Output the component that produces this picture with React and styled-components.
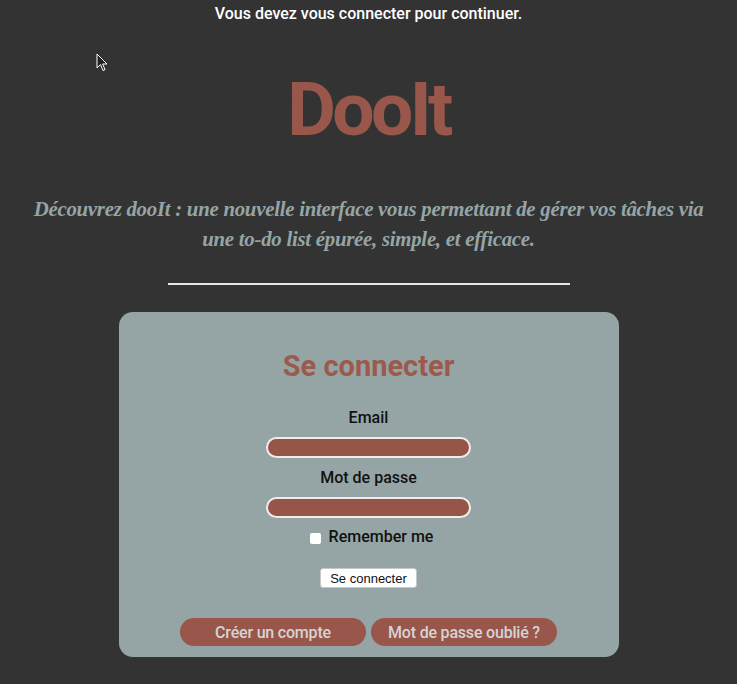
import React, { useState } from "react";
import styled, { createGlobalStyle } from "styled-components";

const GlobalStyle = createGlobalStyle`
  html, body {
    margin: 0;
    padding: 0;
    background: #333333;
  }
  body {
    font-family: Roboto, "Liberation Sans", sans-serif;
    min-height: 684px;
  }
`;

const Page = styled.div`
  position: relative;
  display: flex;
  flex-direction: column;
  align-items: center;
  padding-top: 4px;
`;

const Notice = styled.p`
  margin: 0;
  font-size: 16px;
  line-height: 20px;
  font-weight: 500;
  color: #ffffff;
`;

const Title = styled.h1`
  margin: 47px 0 0;
  font-size: 75px;
  line-height: 76px;
  font-weight: 700;
  color: #98574a;
  letter-spacing: -3.6px;
`;

const Tagline = styled.p`
  margin: 47px 0 0;
  max-width: 690px;
  text-align: center;
  font-family: "Liberation Serif", "DejaVu Serif", serif;
  font-style: italic;
  font-weight: 700;
  font-size: 20.8px;
  line-height: 30px;
  letter-spacing: -0.25px;
  color: #95a5a6;
`;

const Divider = styled.hr`
  margin: 29px 0 0;
  width: 402px;
  height: 2px;
  border: none;
  background: #e6e6e6;
`;

const Card = styled.form`
  margin-top: 27px;
  width: 500px;
  box-sizing: border-box;
  padding: 36px 0 11px;
  border-radius: 14px;
  background: #95a5a6;
  display: flex;
  flex-direction: column;
  align-items: center;
`;

const CardTitle = styled.h2`
  margin: 0;
  font-size: 29px;
  line-height: 36px;
  font-weight: 700;
  color: #9c5a4c;
`;

const Label = styled.label`
  margin-top: ${(p) => p.$gap}px;
  font-size: 16px;
  line-height: 20px;
  font-weight: 500;
  color: #111111;
`;

const Field = styled.input`
  margin-top: ${(p) => p.$gap}px;
  width: 205px;
  height: 21px;
  box-sizing: border-box;
  border: 2px solid #f2ece8;
  border-radius: 11px;
  background: #955548;
  color: #ffffff;
  padding: 0 8px;
  outline: none;
`;

const CheckRow = styled.label`
  margin-top: 9px;
  margin-left: 6px;
  display: flex;
  align-items: center;
  gap: 8px;
  font-size: 16px;
  line-height: 20px;
  font-weight: 500;
  color: #111111;
`;

const Box = styled.span`
  width: 11px;
  height: 11px;
  border-radius: 2px;
  background: ${(p) => (p.$checked ? "#955548" : "#ffffff")};
  margin-top: 2px;
`;

const SubmitButton = styled.button`
  margin-top: 21px;
  height: 20px;
  padding: 0 9px;
  border: 1px solid #c8c8c8;
  border-radius: 3px;
  background: #ffffff;
  font-family: "Liberation Sans", Arial, sans-serif;
  font-size: 13px;
  color: #111111;
`;

const Actions = styled.div`
  margin-top: 30px;
  display: flex;
  gap: 5px;
`;

const PillButton = styled.button`
  width: 186px;
  height: 28px;
  border: none;
  border-radius: 14px;
  background: #98574a;
  color: #d4d4d4;
  font-family: Roboto, "Liberation Sans", sans-serif;
  font-size: 16px;
  font-weight: 500;
  letter-spacing: -0.2px;
`;

const Cursor = styled.svg`
  position: absolute;
  left: 96px;
  top: 53px;
`;

export default function App() {
  const [remember, setRemember] = useState(false);
  return (
    <>
      <GlobalStyle />
      <Page>
        <Notice>Vous devez vous connecter pour continuer.</Notice>
        <Cursor width="12" height="19" viewBox="0 0 12 19">
          <path
            d="M1 1 L1 15 L4.5 11.5 L7 17.5 L9 16.6 L6.6 11 L11 11 Z"
            fill="#222"
            stroke="#fff"
            strokeWidth="1"
            strokeLinejoin="round"
          />
        </Cursor>
        <Title>DooIt</Title>
        <Tagline>
          Découvrez dooIt : une nouvelle interface vous permettant de gérer vos
          tâches via une to-do list épurée, simple, et efficace.
        </Tagline>
        <Divider />
        <Card onSubmit={(e) => e.preventDefault()}>
          <CardTitle>Se connecter</CardTitle>
          <Label $gap={24} htmlFor="email">
            Email
          </Label>
          <Field $gap={9} id="email" type="email" />
          <Label $gap={10} htmlFor="password">
            Mot de passe
          </Label>
          <Field $gap={9} id="password" type="password" />
          <CheckRow onClick={() => setRemember((prev) => !prev)}>
            <Box $checked={remember} />
            Remember me
          </CheckRow>
          <SubmitButton type="submit">Se connecter</SubmitButton>
          <Actions>
            <PillButton type="button">Créer un compte</PillButton>
            <PillButton type="button">Mot de passe oublié ?</PillButton>
          </Actions>
        </Card>
      </Page>
    </>
  );
}
